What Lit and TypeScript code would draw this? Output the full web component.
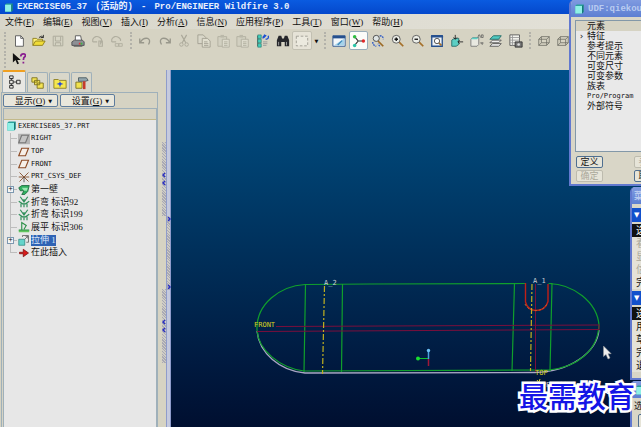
import { LitElement, html, css, svg, nothing, TemplateResult } from "lit";
import { customElement } from "lit/decorators.js";
import { classMap } from "lit/directives/class-map.js";

const icons: Record<string, TemplateResult> = {
  part: svg`<path d="M3 4l2-2h9v10l-2 2H3z" fill="#2aa39c"/><path d="M3 4h9v10H3z" fill="#8ff0e6"/><path d="M12 4l2-2v10l-2 2z" fill="#137a77"/>`,
  newFile: svg`<path d="M4 2h6l3 3v9H4z" fill="#fff" stroke="#555"/><path d="M10 2v3h3" fill="none" stroke="#555"/>`,
  open: svg`<path d="M1 13V5h4l1 1h6v2" fill="#fff27a" stroke="#8a7a1a"/><path d="M1 13l3-5h11l-3 5z" fill="#f0dc38" stroke="#8a7a1a"/><path d="M8 4q3-3 5 0m0-3v3h-3" fill="none" stroke="#222"/>`,
  save: svg`<path d="M2.500 2.500h11v11h-11z" fill="#d6d4c4" stroke="#a9a798"/><path d="M5 3v5h6V3M5 13v-3h6v3" fill="none" stroke="#a9a798"/>`,
  print: svg`<path d="M5 7V2h6l1 5" fill="#fff" stroke="#555"/><path d="M1 9l3-2h9l2 2v4H1z" fill="#8d8f94" stroke="#4a4c50"/><path d="M3 14h10" stroke="#555"/><path d="M9 10h2v2H9z" fill="#e33"/><path d="M11 10h2v2h-2z" fill="#3b4"/>`,
  mail: svg`<path d="M2 9V6q3-5 8-2l2 2v4M2 9h5M9 8h4v6H9zM11 8v4" fill="none" stroke="#b0ae9f" stroke-width="1.300"/>`,
  link: svg`<path d="M2 9V6q3-5 8-2l2 2v2M2 9h5" fill="none" stroke="#b0ae9f" stroke-width="1.300"/><path d="M6 11h4v3H6zM10 11h4v3h-4z" fill="none" stroke="#b0ae9f"/>`,
  undo: svg`<path d="M2 5v5h5M3 9q3-5 8-4q4 2 1 7" fill="none" stroke="#98978b" stroke-width="1.500"/>`,
  redo: svg`<path d="M14 5v5H9M13 9Q10 4 5 5q-4 2-1 7" fill="none" stroke="#98978b" stroke-width="1.500"/>`,
  cut: svg`<path d="M5 1l5 9M11 1L6 10" stroke="#a9a798" stroke-width="1.300"/><circle cx="5" cy="12" r="2" fill="none" stroke="#a9a798"/><circle cx="11" cy="12" r="2" fill="none" stroke="#a9a798"/>`,
  copy: svg`<path d="M1 1h6l3 3v7H1z" fill="#d9d7c9" stroke="#a09e90"/><path d="M6 5h6l3 3v7H6zM8 9h4M8 11h5M8 13h5" fill="#e0decf" stroke="#a09e90"/>`,
  paste: svg`<path d="M1 3h10v11H1z" fill="#d2d0c1" stroke="#b0ae9f"/><path d="M4 1h4v3H4z" fill="#bab8a9"/><path d="M6 6h8v9H6zM8 9h4M8 11h4M8 13h4" fill="#dddbcd" stroke="#b0ae9f"/>`,
  regen: svg`<path d="M2 2v12M2 3h3M2 8h3M2 13h3" stroke="#444" fill="none"/><path d="M2 1h4v4H2zM2 6h4v4H2zM2 11h4v4H2z" fill="#45d0bd" stroke="#17695f" stroke-width=".6"/><path d="M8 5q0-3 3-3M9 1l2 1-2 2M14 2q1 4-3 4" fill="none" stroke="#1c50d2" stroke-width="1.500"/><path d="M8 9h5M8 11h5M8 13h4" stroke="#999"/>`,
  find: svg`<path d="M1 7l2-5h3l1 3h2l1-3h3l2 5v7h-5V9H6v5H1z" fill="#26272b"/><path d="M3 9v4M12 9v4" stroke="#aaa"/>`,
  select: svg`<path d="M1.500 2.500h13v11h-13z" fill="#eceadf" stroke="#9b9a90" stroke-dasharray="3 2"/>`,
  redraw: svg`<path d="M1 2h14v12H1z" fill="#f4f8fb" stroke="#26508e"/><path d="M1 2h14v3H1z" fill="#26508e"/><path d="M2 13L14 5v8z" fill="#a6d3ea"/><path d="M6 12l5-5 1 1-5 5z" fill="#3b87ba"/>`,
  spin: svg`<path d="M3 3l4 5-4 5M7 8h6" stroke="#333" fill="none" stroke-width="1.300"/><circle cx="3" cy="3" r="2" fill="#2cbd40"/><circle cx="3" cy="13" r="2" fill="#29c5a8"/><circle cx="13" cy="8" r="2" fill="#e02a2a"/>`,
  orientMode: svg`<circle cx="6" cy="5" r="3.500" fill="#dfe5e4" stroke="#444"/><path d="M8 8l6 6" stroke="#9c6a25" stroke-width="2"/><path d="M10 2q4 0 4 4M2 9q0 4 4 5m4 0l-2-3" fill="none" stroke="#2a57c6" stroke-width="1.500" stroke-dasharray="2 1"/>`,
  zoomIn: svg`<path d="M9 9l5 5" stroke="#a5702b" stroke-width="2"/><circle cx="6" cy="6" r="4.500" fill="#eceee8" stroke="#555"/><path d="M4 6h4M6 4v4" stroke="#111" stroke-width="1.500"/>`,
  zoomOut: svg`<path d="M9 9l5 5" stroke="#a5702b" stroke-width="2"/><circle cx="6" cy="6" r="4.500" fill="#eceee8" stroke="#555"/><path d="M4 6h4" stroke="#111" stroke-width="1.500"/>`,
  refit: svg`<path d="M2 2h12v12H2z" fill="#eef3f7" stroke="#26508e" stroke-width="1.500"/><path d="M1 3h14" stroke="#26508e" stroke-width="2"/><path d="M10 10l3 3" stroke="#a5702b" stroke-width="2"/><circle cx="8" cy="8" r="3" fill="#fff" stroke="#444"/>`,
  orient: svg`<path d="M2 7l3-2h5v7l-3 2H2z" fill="#5ccfc4" stroke="#256b68"/><path d="M6 1v5M4 4l2 2 2-2M15 9H9m2-2L9 9l2 2" fill="none" stroke="#222"/>`,
  saved: svg`<path d="M1 6l2-2h7v8l-2 2H1z" fill="#e8e8e0" stroke="#777"/><path d="M1 6h7l2-2H3z" fill="#5ccfc4"/><path d="M9 4l1-3h1l1 3M13 1v3h2V1zM12 10h3l-1 2z" stroke="#555" stroke-width=".8" fill="none"/>`,
  layers: svg`<path d="M1 14l3-3h10l-3 3z" fill="#eee" stroke="#555"/><path d="M1 10l3-3h10l-3 3z" fill="#eee" stroke="#555"/><path d="M1 6l4-4h9l-3 4z" fill="#4fc9c0" stroke="#216864"/>`,
  views: svg`<path d="M1 1h11v12H1z" fill="#f2f2ec" stroke="#555"/><path d="M1 4h11M1 7h11M1 10h7M4 1v12" stroke="#999"/><path d="M7 9h8v6H7z" fill="#777" stroke="#333"/><circle cx="11" cy="12" r="1.500" fill="#ddd"/>`,
  wire: svg`<path d="M2 6l3-3h9v7l-3 3H2zM2 6h9v7M11 6l3-3M5 3v7h9M5 10l-3 3" fill="none" stroke="#6d6c63" stroke-width=".9"/>`,
  help: svg`<path d="M1 1v11l3-3 2 5 2-1-2-4h4z" fill="#111"/><path d="M10 5q0-3 3-3t2 3q-2 1-2 4M13 11v2" fill="none" stroke="#8a2090" stroke-width="2"/>`,
  tabTree: svg`<path d="M3 1h4v3H3zM3 6h4v4H3zM3 12h4v3H3zM11 6h4v4h-4zM7 8h4M5 4v2M5 10v2" fill="none" stroke="#222"/>`,
  tabFolders: svg`<path d="M1 2h6v5H1zM4 5h6v5H4zM7 8h7v6H7z" fill="#f4e455" stroke="#7b701c"/>`,
  tabFav: svg`<path d="M1 4h5l1 1h8v9H1z" fill="#f6e84d" stroke="#8b7e21"/><path d="M8 6l1 2 3 1-3 1-1 3-1-3-3-1 3-1z" fill="#2448d8"/>`,
  tabTools: svg`<path d="M1 7h7v7H1z" fill="#f1e24d" stroke="#7b701c"/><path d="M4 2h9l2 3-3 1H4z" fill="#93a5ac" stroke="#4c5a60"/><path d="M9 6h3v9H9z" fill="#c63b2a"/>`,
  plane: svg`<path d="M5 3h9l-4 10H1z" fill="#f6efe8" stroke="#8c4a24" stroke-width="1.500"/>`,
  planeOff: svg`<path d="M0 1h16v14H0z" fill="#b5b5b5"/><path d="M5 3h9l-4 10H1z" fill="#c4c4c4" stroke="#777" stroke-width="1.500"/>`,
  csys: svg`<path d="M2 2l12 12M14 2L2 14M1 8h14" stroke="#8c5a3c" stroke-width="1.300"/><path d="M8 8v7" stroke="#333"/>`,
  wall: svg`<path d="M1 5l4-3h10l-2 8-4 4H5l3-5H3z" fill="#2fae5e" stroke="#155e34"/><path d="M5 5h8l-1 4H8z" fill="#9be8b2"/>`,
  bend: svg`<path d="M3 1l5 7 5-7M1 7l6 4M15 7l-6 4M8 4v11M4 10v5M12 10v5" stroke="#2f8f5a" stroke-width="1.600" fill="none"/>`,
  flat: svg`<path d="M1 12h14v3H1z" fill="#62c65e"/><path d="M5 12V2l6 4-3 5M1 12h14" stroke="#2d9149" stroke-width="1.500" fill="none"/>`,
  extrude: svg`<path d="M1 7h8v8H1z" fill="#65d4cb" stroke="#2f8580"/><path d="M6 4V2h8v9h-3M9 7l4-4M10 3h3v3" fill="none" stroke="#555"/>`,
  insert: svg`<path d="M2 7h5V3l7 5-7 5V9H2z" fill="#d81b1b" stroke="#7c0c0c"/>`,
};

const icon = (name: string) =>
  html`<svg class="icon" viewBox="0 0 16 16" aria-hidden="true">${icons[name]}</svg>`;

const iconStyles = css`
  .icon { width: 14px; height: 14px; display: block; flex: none; }
  button { font: inherit; color: inherit; margin: 0; padding: 0; }
`;

@customElement("app-toolbar")
class AppToolbar extends LitElement {
  static styles = [iconStyles, css`
    :host { display: block; background: #d6d3c3; padding: 2px 4px 0; height: 39px; }
    .row { display: flex; align-items: center; height: 19px; }
    .grip { width: 0; height: 17px; border-left: 2px dotted #b3b2aa; margin-right: 3px; }
    .group { display: flex; flex: none; margin-right: 3px; }
    .g6 { width: 118px; }
    .g9 { width: 177px; margin-right: 0; }
    .g10 { width: 197px; }
    .g2 { width: 39px; }
    .tool { flex: 1; height: 19px; display: flex; align-items: center; justify-content: center;
      background: none; border: 1px solid transparent; }
    .tool.on { background: #fbfcf9; border-color: #98adb9; border-radius: 2px; }
    .tool.soft { background: #e6e3d7; border-color: #c2c0b2; border-radius: 2px; }
    .drop { width: 9px; height: 19px; margin-right: 3px; border: 0; background: none; font: 5px "DejaVu Sans", sans-serif; }
    .second { height: 18px; }
    .second .tool { flex: none; width: 20px; }
  `];

  private group(cls: string, names: string[]) {
    return html`<div class="group ${cls}">${names.map((n) => html`
      <button class=${classMap({ tool: true, on: n === "spin", soft: n === "select" })} aria-label=${n}>${icon(n)}</button>`)}</div>`;
  }

  render() {
    return html`
      <div class="row">
        <span class="grip"></span>
        ${this.group("g6", ["newFile", "open", "save", "print", "mail", "link"])}
        <span class="grip"></span>
        ${this.group("g9", ["undo", "redo", "cut", "copy", "paste", "paste", "regen", "find", "select"])}
        <button class="drop" aria-label="more">▼</button>
        <span class="grip"></span>
        ${this.group("g10", ["redraw", "spin", "orientMode", "zoomIn", "zoomOut", "refit", "orient", "saved", "layers", "views"])}
        <span class="grip"></span>
        ${this.group("g2", ["wire", "wire"])}
      </div>
      <div class="row second"><span class="grip"></span>${this.group("", ["help"])}</div>`;
  }
}

interface Node { icon: string; label: string; cjk?: boolean; expand?: boolean; selected?: boolean; root?: boolean }

@customElement("model-tree")
class ModelTree extends LitElement {
  static styles = [iconStyles, css`
    :host { display: flex; flex-direction: column; width: 158px; flex: none; background: #d6d3c3; }
    .tabs { display: flex; gap: 1px; padding: 0 2px; height: 22px; align-items: flex-end; }
    .tab { width: 21px; height: 20px; display: flex; align-items: center; justify-content: center;
      background: #d9d7ca; border: 1px solid #9fb0ba; border-bottom: 0; border-radius: 2px 2px 0 0; }
    .tab.active { width: 24px; height: 22px; background: #e8e7e2; border-top: 2px solid #f0a020; }
    .frame { flex: 1; display: flex; flex-direction: column; margin-left: 1px; border: 1px solid #9fb0ba; border-bottom: 0; }
    .actions { display: flex; gap: 2px; padding: 1px; }
    .action { width: 55px; height: 13px; display: flex; align-items: center; justify-content: center; gap: 3px;
      font: 9px "Liberation Serif", "Noto Sans CJK SC", serif; color: #111;
      background: #e9e7dc; border: 1px solid #5e7c9c; border-radius: 2px; padding-left: 6px; }
    .tri { font: 5px "DejaVu Sans", sans-serif; }
    .list { flex: 1; margin: 0 0 0 1px; background: #e7e7e7; border: 1px solid #9fb0ba; border-bottom: 0; }
    .head { height: 10px; background: #d6d3c3; border-bottom: 1px solid #c2b98a; }
    ul { list-style: none; margin: 0; padding: 0; height: 139px; display: flex; flex-direction: column; }
    li { flex: 1; display: flex; align-items: center; gap: 1px; padding-left: 1px; color: #111;
      font: 7px/9px "DejaVu Sans Mono", monospace; }
    li.cjk { font: 9px/11px "Liberation Serif", "Noto Sans CJK SC", serif; }
    li .icon { width: 12px; height: 12px; }
    .stem { width: 12px; align-self: stretch; display: flex; align-items: center; justify-content: center;
      background: linear-gradient(#bdbdbd, #bdbdbd) 5px 0 / 1px 100% no-repeat,
        linear-gradient(#bdbdbd, #bdbdbd) 5px 50% / 7px 1px no-repeat; }
    li:last-child .stem { background-size: 1px 50%, 7px 1px; }
    .stem button { width: 7px; height: 7px; border: 1px solid #7c98b0; background: #f5f5f5;
      font: 7px/5px "DejaVu Sans Mono", monospace; margin-right: 1px; }
    .selected { background: #2f63b5; color: #dfe9fa; }
  `];

  private nodes: Node[] = [
    { icon: "part", label: "EXERCISE05_37.PRT", root: true },
    { icon: "planeOff", label: "RIGHT" },
    { icon: "plane", label: "TOP" },
    { icon: "plane", label: "FRONT" },
    { icon: "csys", label: "PRT_CSYS_DEF" },
    { icon: "wall", label: "第一壁", cjk: true, expand: true },
    { icon: "bend", label: "折弯 标识92", cjk: true },
    { icon: "bend", label: "折弯 标识199", cjk: true },
    { icon: "flat", label: "展平 标识306", cjk: true },
    { icon: "extrude", label: "拉伸 1", cjk: true, expand: true, selected: true },
    { icon: "insert", label: "在此插入", cjk: true },
  ];

  render() {
    return html`
      <div class="tabs">${["tabTree", "tabFolders", "tabFav", "tabTools"].map((t, i) => html`
        <button class=${classMap({ tab: true, active: i === 0 })} aria-label=${t}>${icon(t)}</button>`)}</div>
      <div class="frame">
        <div class="actions">
          <button class="action"><span>显示(<u>O</u>)</span><span class="tri">▼</span></button>
          <button class="action"><span>设置(<u>G</u>)</span><span class="tri">▼</span></button>
        </div>
        <div class="list">
          <div class="head"></div>
          <ul>${this.nodes.map((n) => html`
            <li class=${classMap({ cjk: !!n.cjk })}>
              ${n.root ? nothing : html`<span class="stem">${n.expand ? html`<button aria-label="expand">+</button>` : nothing}</span>`}
              ${icon(n.icon)}<span class=${classMap({ selected: !!n.selected })}>${n.label}</span>
            </li>`)}</ul>
        </div>
      </div>`;
  }
}

@customElement("panel-splitter")
class PanelSplitter extends LitElement {
  static styles = css`
    :host { display: flex; width: 13px; flex: none; background: #d6d3c3; }
    .col { width: 4px; margin-left: 4px; display: flex; flex-direction: column; padding-top: 72px; }
    .col.right { width: 3px; margin: 0; padding-top: 146px; border-left: 1px solid #8f9ccb; border-right: 1px solid #8f9ccb; background: #c5cade; }
    .hatch { height: 74px; display: flex; flex-direction: column; align-items: center; justify-content: center; gap: 2px;
      background: repeating-linear-gradient(45deg, #a9a9b4 0 1px, #cfcdc6 1px 2px); }
    .hatch.ends { justify-content: space-between; }
    .gap { height: 73px; }
    svg { width: 4px; height: 6px; display: block; }
  `;
  private arrow(d: string) {
    return html`<svg viewBox="0 0 4 6" aria-hidden="true"><path d=${d} fill="none" stroke="#2a2fc0" stroke-width="1.500"/></svg>`;
  }
  render() {
    const left = () => this.arrow("M3 1L1 3l2 2");
    const right = () => this.arrow("M1 1l2 2-2 2");
    return html`
      <div class="col"><div class="hatch">${left()}${left()}</div><div class="gap"></div><div class="hatch">${left()}${left()}</div></div>
      <div class="col right"><div class="hatch ends">${right()}${right()}</div></div>`;
  }
}

@customElement("model-view")
class ModelView extends LitElement {
  static styles = css`
    :host { display: block; flex: 1; min-width: 0; overflow: hidden;
      background: linear-gradient(#00508a, #004272 25%, #002d57 55%, #001a40 82%, #000f30); }
    svg { display: block; width: 100%; height: 100%; }
    text { font: 7px "DejaVu Sans Mono", monospace; }
    .edge { fill: none; stroke: #10a02c; stroke-width: 1.2; }
    .shade { fill: none; stroke: #a9a8c4; stroke-width: 1.3; }
    .datum { fill: none; stroke: #7a0f3c; stroke-width: 1; }
    .axis { fill: none; stroke: #c0b020; stroke-width: 1.2; stroke-dasharray: 6 2 2 2; }
    .cut { fill: none; stroke: #c02018; stroke-width: 1.4; }
    .yellow { fill: #d8d020; }
    .pale { fill: #c8cdd4; }
  `;
  render() {
    return html`<svg viewBox="171 70 470 357" preserveAspectRatio="xMinYMin slice" role="img" aria-label="model">
      <path class="shade" d="M257 331C259 353 280 371 305 373L535 372.500C570 372 597 352 599 330"/>
      <path class="edge" d="M305 284.500C280 286 256 304 257 330C258 350 280 368 304 371L549 370C578 367 598 350 599 325C597 302 573 284 549 283.500M305 284.500L370 284L525 283.500"/>
      <path class="edge" d="M305.500 284L304 372M342.500 284L341.500 372M514.500 283L512 371M552 284L550 371M548.500 283.500h4"/>
      <path class="datum" d="M276 326.500L599 325M257 331.500L599 329.500M599 324.500v6M535.500 284v88"/>
      <path class="cut" d="M525.500 283v19q2 8 10 8.500q10 0 12.500-9V284"/>
      <path d="M525 304q3 6 10 6.500q9 0 12-7" fill="none" stroke="#b97030" stroke-dasharray="2 2"/>
      <path class="axis" d="M324.500 286L322.500 374M532 284L530.500 371"/>
      <path d="M418 358.500h10.500" stroke="#10c030"/><circle cx="418" cy="358.500" r="2" fill="#18e030"/>
      <path d="M428.500 351v8" stroke="#4aa0e0" stroke-width="1.500"/><circle cx="428.500" cy="350.500" r="1.700" fill="#6cc0f4"/>
      <path d="M428.500 359v7" stroke="#a01838" stroke-width="1.500"/>
      <text class="pale" x="324" y="285">A_2</text>
      <text class="pale" x="533" y="283">A_1</text>
      <text class="yellow" x="254" y="327">FRONT</text>
      <text class="yellow" x="535" y="375">TOP</text>
      <text class="pale" x="542" y="387">PRT_CSYS_DEF</text>
      <path d="M537 380l3 4M540 379l-2 6" stroke="#d8d020"/>
      <path d="M603.500 346v10.500l2.500-2 2 4.500 2-1-2-4.300h3.200z" fill="#eee" stroke="#999" stroke-width=".5"/>
    </svg>`;
  }
}

@customElement("tool-window")
class ToolWindow extends LitElement {
  static properties = { heading: { type: String }, part: { type: Boolean } };
  static styles = [iconStyles, css`
    :host { display: flex; flex-direction: column; box-sizing: border-box; border: 2px solid #6279cf; border-top: 0;
      border-radius: 5px 5px 0 0; background: #d9d6c7; overflow: hidden; }
    header { height: 17px; flex: none; display: flex; align-items: center; gap: 3px; padding-left: 2px; background: linear-gradient(#7f9ae0, #5d7fd2);
      color: #b9cbf0; font: bold 9px "Liberation Mono", "Noto Sans CJK SC", monospace; white-space: nowrap; }
    .icon { width: 12px; height: 12px; }
  `];
  declare heading: string;
  declare part: boolean;
  render() {
    return html`<header>${this.part ? icon("part") : nothing}<span>${this.heading}</span></header><slot></slot>`;
  }
}

@customElement("app-root")
class AppRoot extends LitElement {
  static styles = [iconStyles, css`
    :host { display: flex; flex-direction: column; position: relative; height: 100vh; overflow: hidden;
      font: 9px/10px "Liberation Serif", "Noto Sans CJK SC", serif; color: #111; background: #d6d3c3; }
    .title { height: 14px; flex: none; display: flex; align-items: center; gap: 8px; padding: 0 3px;
      background: linear-gradient(#0a5be0, #0448cc); color: #e8f0fc; white-space: nowrap;
      font: bold 9px/14px "Liberation Mono", "Noto Sans CJK SC", monospace; }
    .title .file { display: flex; align-items: center; gap: 3px; }
    .title .icon { width: 11px; height: 11px; }
    .menu { height: 15px; flex: none; display: flex; align-items: center; gap: 9px; padding: 0 5px; white-space: nowrap;
      background: linear-gradient(90deg, #d8d6ca, #e3e1d8); }
    .menu button { border: 0; background: none; }
    .body { flex: 1; display: flex; min-height: 0; }
    .udf { position: absolute; left: 569px; top: 0; width: 150px; height: 186px; }
    .params { margin: 3px 4px 0; height: 132px; flex: none; box-sizing: border-box; border: 1px solid #8398a8; background: #e9e9e9; }
    table { border-collapse: collapse; width: 100%; }
    th { text-align: left; font-weight: normal; background: #d6d3c3; }
    th, td { padding: 0; height: 10px; line-height: 10px; }
    .mark { width: 11px; text-align: center; font: 9px/10px "DejaVu Sans", sans-serif; }
    .mono { font: 7px/10px "DejaVu Sans Mono", monospace; }
    .buttons { display: grid; grid-template-columns: 27px 27px; column-gap: 31px; row-gap: 2px; padding: 4px 5px; }
    .buttons button { height: 12px; box-sizing: border-box; border: 1px solid #4f6f90; border-radius: 2px; background: #e6e4d8; line-height: 9px; }
    .buttons button:disabled { border-color: #bdbbae; color: #aaa89a; }
    .managers { position: absolute; left: 630px; top: 187px; width: 110px; height: 193px; }
    .band { height: 14px; flex: none; margin-top: 2px; display: flex; align-items: center; padding-left: 2px; background: #1250cc; color: #fff;
      font: 7px "DejaVu Sans", sans-serif; }
    .band.first { margin-top: 4px; }
    .items { background: #e4e2d8; display: flex; flex-direction: column; margin-top: 2px; }
    .items button { border: 0; background: none; text-align: left; height: 13px; line-height: 13px; padding-left: 4px; font-size: 10px; }
    .items .on { background: #111; color: #fff; }
    .items button:disabled { color: #aaa89a; }
    .picker { position: absolute; left: 630px; top: 381px; width: 110px; height: 60px; }
    .picker p { margin: 3px 0 0; padding-left: 2px; }
    .picker button { margin: 3px 6px; height: 14px; border: 1px solid #4f6f90; border-radius: 2px; background: #e6e4d8; }
    .brand { position: absolute; right: 6px; bottom: 14px; margin: 0; font: 500 29px/36px "Noto Sans CJK SC", sans-serif;
      color: #1414e6; -webkit-text-stroke: 5px #fff; paint-order: stroke fill; }
  `];

  private menus: [string, string][] = [["文件", "F"], ["编辑", "E"], ["视图", "V"], ["插入", "I"], ["分析", "A"],
    ["信息", "N"], ["应用程序", "P"], ["工具", "T"], ["窗口", "W"], ["帮助", "H"]];
  private params = ["特征", "参考提示", "不同元素", "可变尺寸", "可变参数", "族表", "Pro/Program", "外部符号"];

  render() {
    return html`
      <div class="title"><span class="file">${icon("part")}EXERCISE05_37</span><span>(活动的)</span><span>-</span><span>Pro/ENGINEER Wildfire 3.0</span></div>
      <nav class="menu">${this.menus.map(([t, k]) => html`<button>${t}(<u>${k}</u>)</button>`)}</nav>
      <app-toolbar></app-toolbar>
      <div class="body">
        <model-tree></model-tree>
        <panel-splitter></panel-splitter>
        <model-view></model-view>
      </div>
      <tool-window class="udf" heading="UDF:qiekou" part>
        <div class="params"><table>
          <tr><th></th><th>元素</th></tr>
          ${this.params.map((p, i) => html`<tr><td class="mark">${i === 0 ? "›" : nothing}</td><td class=${classMap({ mono: p.startsWith("Pro") })}>${p}</td></tr>`)}
        </table></div>
        <div class="buttons"><button>定义</button><button disabled>参照</button><button disabled>确定</button><button>取消</button></div>
      </tool-window>
      <tool-window class="managers" heading="菜单管理器">
        <div class="band first">▼</div>
        <div class="items"><button class="on">选取</button><button disabled>看</button><button disabled>显示</button><button disabled>信息</button><button>完成</button></div>
        <div class="band">▼</div>
        <div class="items"><button class="on">选取</button><button>用户</button><button>草绘</button><button>完成</button><button>退出</button></div>
      </tool-window>
      <tool-window class="picker" heading="" part>
        <p>选取</p><button>确定</button>
      </tool-window>
      <p class="brand">最需教育</p>`;
  }
}
